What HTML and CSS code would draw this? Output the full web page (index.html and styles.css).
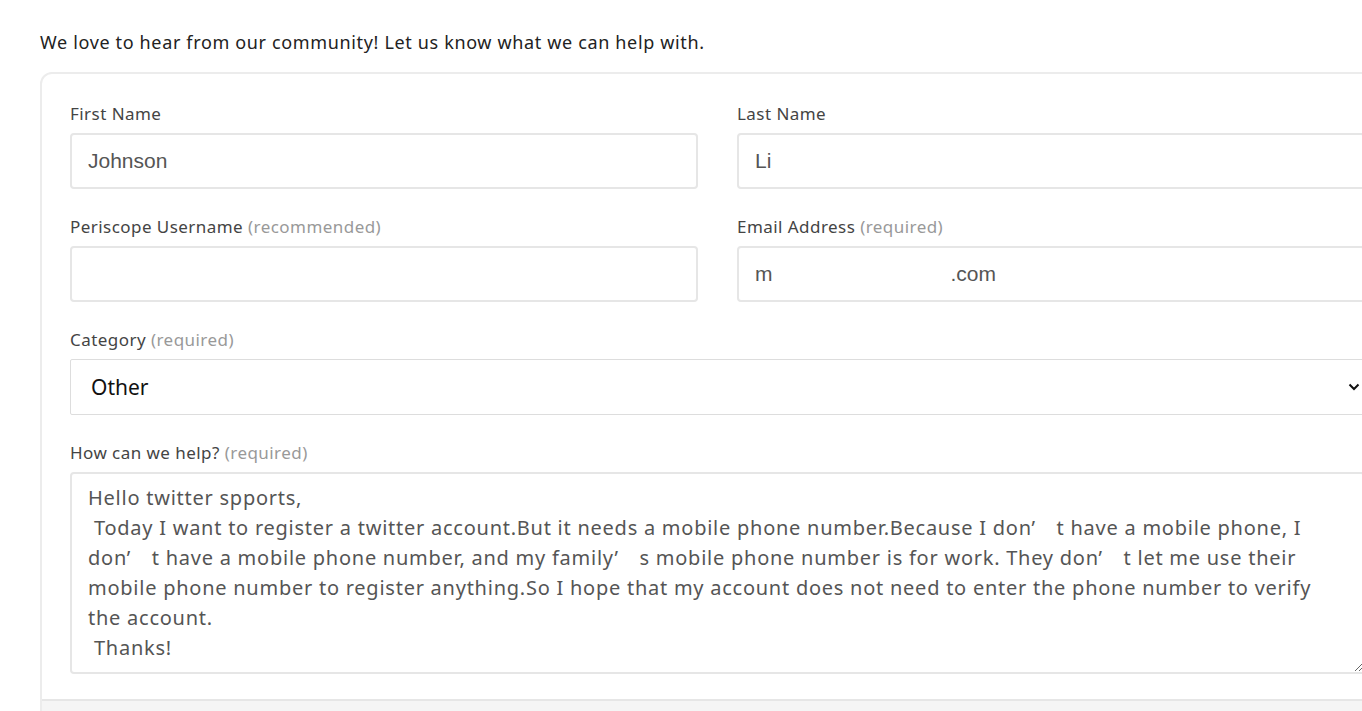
FILE: index.html
```html
<!DOCTYPE html>
<html lang="en">
<head>
<meta charset="utf-8">
<title>Contact</title>
<link rel="stylesheet" href="styles.css">
</head>
<body>
<main class="page">
  <p class="intro">We love to hear from our community! Let us know what we can help with.</p>
  <form class="card">
    <div class="card-body">
      <div class="grid">
        <div class="field">
          <label class="label" for="fn">First Name</label>
          <input class="input" id="fn" type="text" value="Johnson">
        </div>
        <div class="field">
          <label class="label" for="ln">Last Name</label>
          <input class="input" id="ln" type="text" value="Li">
        </div>
        <div class="field">
          <label class="label" for="pu">Periscope Username <span class="hint">(recommended)</span></label>
          <input class="input" id="pu" type="text" value="">
        </div>
        <div class="field">
          <label class="label">Email Address <span class="hint">(required)</span></label>
          <div class="input email"><span>m</span><span class="redact"></span><span>.com</span></div>
        </div>
        <div class="field wide">
          <label class="label" for="cat">Category <span class="hint">(required)</span></label>
          <div class="select-wrap">
            <select class="select" id="cat"><option>Other</option></select>
            <svg class="chev" width="12" height="8" viewBox="0 0 12 8"><path d="M1.5 1.5 L6 6 L10.5 1.5" fill="none" stroke="#111" stroke-width="2"/></svg>
          </div>
        </div>
        <div class="field wide">
          <label class="label" for="msg">How can we help? <span class="hint">(required)</span></label>
          <textarea class="textarea" id="msg">Hello twitter spports,
 Today I want to register a twitter account.But it needs a mobile phone number.Because I don’&#8195;t have a mobile phone, I don’&#8195;t have a mobile phone number, and my family’&#8195;s mobile phone number is for work. They don’&#8195;t let me use their mobile phone number to register anything.So I hope that my account does not need to enter the phone number to verify the account.
 Thanks!</textarea>
        </div>
      </div>
    </div>
    <div class="card-foot"></div>
  </form>
</main>
</body>
</html>
```
FILE: styles.css
```css
html, body {
  margin: 0;
  padding: 0;
  overflow: hidden;
  background: #fff;
}
.page {
  padding: 30px 0 0 40px;
  width: 1400px;
  font-family: "Noto Sans", "Open Sans", sans-serif;
}
.intro {
  margin: 0 0 18px;
  font-size: 18px;
  line-height: 24px;
  letter-spacing: 0.65px;
  color: #222;
}
.card {
  width: 1355px;
  border: 2px solid #ececec;
  border-radius: 12px 12px 0 0;
  box-sizing: border-box;
}
.card-body {
  padding: 30px 28px 25px;
}
.grid {
  display: grid;
  grid-template-columns: 628px 628px;
  column-gap: 39px;
  row-gap: 28px;
}
.field {
  display: flex;
  flex-direction: column;
  gap: 9px;
}
.wide { grid-column: 1 / -1; }
.label {
  display: block;
  height: 20px;
  overflow: visible;
  font-size: 17px;
  line-height: 20px;
  letter-spacing: 0.45px;
  color: #444;
  white-space: nowrap;
}
.hint { color: #999; }
.input {
  height: 56px;
  box-sizing: border-box;
  border: 2px solid #e6e6e6;
  border-radius: 4px;
  padding: 0 16px;
  font-family: "Liberation Sans", Arial, sans-serif;
  font-size: 21px;
  color: #555;
  background: #fff;
  outline: none;
}
.email {
  display: flex;
  align-items: center;
}
.redact { width: 178px; }
.select-wrap {
  position: relative;
  height: 56px;
}
.select {
  display: block;
  width: 100%;
  height: 56px;
  box-sizing: border-box;
  border: 1px solid #ddd;
  border-radius: 2px;
  padding: 0 20px;
  appearance: none;
  -webkit-appearance: none;
  background: #fff;
  font-family: "Noto Sans", sans-serif;
  font-size: 21px;
  color: #111;
}
.chev {
  position: absolute;
  right: 5px;
  top: 24px;
}
.textarea {
  display: block;
  height: 202px;
  box-sizing: border-box;
  border: 2px solid #e6e6e6;
  border-radius: 4px;
  padding: 9px 16px;
  font-family: "Noto Sans", sans-serif;
  font-size: 20px;
  line-height: 30px;
  letter-spacing: 0.75px;
  color: #555;
  resize: both;
  outline: none;
}
.card-foot {
  border-top: 2px solid #e6e6e6;
  background: #f5f5f5;
  height: 40px;
}
```
